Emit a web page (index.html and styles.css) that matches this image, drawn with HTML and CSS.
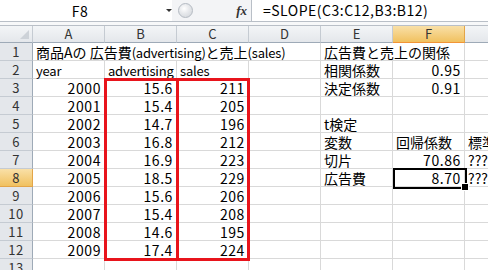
FILE: index.html
```html
<!DOCTYPE html>
<html lang="ja">
<head>
  <meta charset="UTF-8">
  <meta name="viewport" content="width=device-width, initial-scale=1.0">
  <title>広告費と売上</title>
  <link rel="stylesheet" href="styles.css">
</head>
<body>
  <div class="formula-bar">
    <div class="name-box">
      <span class="name">F8</span>
      <span class="drop"></span>
    </div>
    <div class="bar-tools">
      <span class="grip"></span>
      <span class="fx">fx</span>
    </div>
    <div class="formula">=SLOPE(C3:C12,B3:B12)</div>
  </div>
  <div class="bar-gap"></div>

  <div class="sheet">
    <div class="h corner"></div><div class="h">A</div><div class="h">B</div><div class="h">C</div><div class="h">D</div><div class="h">E</div><div class="h on">F</div><div class="h"></div>

    <div class="r">1</div><div class="c span4">商品Aの 広告費<span class="lat">(advertising)</span>と売上<span class="lat">(sales)</span></div><div class="c span2">広告費と売上の関係</div><div class="c"></div>
    <div class="r">2</div><div class="c lat">year</div><div class="c lat">advertising</div><div class="c lat">sales</div><div class="c"></div><div class="c">相関係数</div><div class="c n">0.95</div><div class="c"></div>
    <div class="r">3</div><div class="c n">2000</div><div class="c n">15.6</div><div class="c n">211</div><div class="c"></div><div class="c">決定係数</div><div class="c n">0.91</div><div class="c"></div>
    <div class="r">4</div><div class="c n">2001</div><div class="c n">15.4</div><div class="c n">205</div><div class="c"></div><div class="c"></div><div class="c"></div><div class="c"></div>
    <div class="r">5</div><div class="c n">2002</div><div class="c n">14.7</div><div class="c n">196</div><div class="c"></div><div class="c">t検定</div><div class="c"></div><div class="c"></div>
    <div class="r">6</div><div class="c n">2003</div><div class="c n">16.8</div><div class="c n">212</div><div class="c"></div><div class="c">変数</div><div class="c">回帰係数</div><div class="c">標準誤差</div>
    <div class="r">7</div><div class="c n">2004</div><div class="c n">16.9</div><div class="c n">223</div><div class="c"></div><div class="c">切片</div><div class="c n">70.86</div><div class="c">???</div>
    <div class="r on">8</div><div class="c n">2005</div><div class="c n">18.5</div><div class="c n">229</div><div class="c"></div><div class="c">広告費</div><div class="c n">8.70</div><div class="c">???</div>
    <div class="r">9</div><div class="c n">2006</div><div class="c n">15.6</div><div class="c n">206</div><div class="c"></div><div class="c"></div><div class="c"></div><div class="c"></div>
    <div class="r">10</div><div class="c n">2007</div><div class="c n">15.4</div><div class="c n">208</div><div class="c"></div><div class="c"></div><div class="c"></div><div class="c"></div>
    <div class="r">11</div><div class="c n">2008</div><div class="c n">14.6</div><div class="c n">195</div><div class="c"></div><div class="c"></div><div class="c"></div><div class="c"></div>
    <div class="r">12</div><div class="c n">2009</div><div class="c n">17.4</div><div class="c n">224</div><div class="c"></div><div class="c"></div><div class="c"></div><div class="c"></div>
    <div class="r">13</div><div class="c"></div><div class="c"></div><div class="c"></div><div class="c"></div><div class="c"></div><div class="c"></div><div class="c"></div>

    <div class="mark mark-b"></div>
    <div class="mark mark-c"></div>
    <div class="pick"></div>
  </div>
</body>
</html>
```

FILE: styles.css
```css
* {
  margin: 0;
  padding: 0;
  box-sizing: border-box;
}

body {
  width: 488px;
  height: 270px;
  overflow: hidden;
  background: #fff;
  color: #000;
  font-family: "Noto Sans CJK JP", sans-serif;
  font-size: 14px;
}

/* formula bar */
.formula-bar {
  display: flex;
  height: 22px;
  border-bottom: 1px solid #b9bfc7;
}

.name-box {
  width: 172px;
  display: flex;
  align-items: center;
  background: #fff;
}

.name-box .name {
  width: 160px;
  text-align: center;
  letter-spacing: 0.5px;
}

.name-box .drop {
  width: 0;
  height: 0;
  margin-left: 6px;
  border-left: 3px solid transparent;
  border-right: 3px solid transparent;
  border-top: 3px solid #333;
}

.bar-tools {
  width: 79px;
  display: flex;
  align-items: center;
  background: #f3f4f6;
}

.grip {
  width: 15px;
  height: 15px;
  margin-left: 6px;
  border-radius: 50%;
  border: 1px solid #b4bac2;
  background: radial-gradient(circle at 40% 35%, #ffffff 0, #e6e8eb 45%, #cfd3d8 100%);
}

.fx {
  margin-left: auto;
  padding-right: 4px;
  font-family: "Liberation Serif", serif;
  font-style: italic;
  font-weight: bold;
  font-size: 13px;
  color: #333;
}

.formula {
  flex: 1;
  padding-left: 11px;
  line-height: 21px;
  letter-spacing: 0.5px;
  background: #fff;
  border-left: 1px solid #b9bfc7;
  white-space: nowrap;
}

.bar-gap {
  height: 4px;
  background: #f7f8f9;
  border-bottom: 1px solid #b9bfc7;
}

/* sheet grid */
.sheet {
  position: relative;
  display: grid;
  grid-template-columns: 33px repeat(7, 72px);
  grid-template-rows: 17px repeat(13, 18px);
}

.c {
  padding: 2px 3px 0;
  line-height: 15px;
  white-space: nowrap;
  border-right: 1px solid #d9d9d9;
  border-bottom: 1px solid #d9d9d9;
}

.c.n {
  text-align: right;
  letter-spacing: 0.6px;
}

.lat {
  font-size: 13px;
  letter-spacing: -0.2px;
}

.span4 {
  grid-column: span 4;
}

.span2 {
  grid-column: span 2;
}

.h,
.r {
  text-align: center;
  color: #333;
  font-size: 13px;
  line-height: 16px;
  background: linear-gradient(#f3f5f7, #e4e7eb);
}

.h {
  border-right: 1px solid #c5cbd2;
  border-bottom: 1px solid #9eaab7;
}

.r {
  line-height: 17px;
  letter-spacing: 0.5px;
  background: #e4e7eb;
  border-right: 1px solid #9eaab7;
  border-bottom: 1px solid #c5cbd2;
}

.h.on,
.r.on {
  background: linear-gradient(#f9e0a8, #f1c15f);
  border-color: #e3a548;
}

.h.on {
  border-bottom-color: #f29436;
}

.corner {
  position: relative;
}

.corner::after {
  content: "";
  position: absolute;
  right: 3px;
  bottom: 3px;
  border-left: 9px solid transparent;
  border-bottom: 9px solid #cdd2d8;
}

/* overlays */
.mark {
  position: absolute;
  grid-row: 4 / 14;
  top: -1px;
  bottom: -2px;
  border: 3px solid #e8141c;
}

.mark-b {
  grid-column: 3 / 4;
  left: -1px;
  right: -2px;
}

.mark-c {
  grid-column: 4 / 5;
  left: -1px;
  right: -1px;
}

.pick {
  position: absolute;
  grid-column: 7 / 8;
  grid-row: 9 / 10;
  top: -1px;
  left: 0;
  right: -2px;
  bottom: -2px;
  border: 2px solid #000;
}

.pick::after {
  content: "";
  position: absolute;
  right: -4px;
  bottom: -4px;
  width: 6px;
  height: 6px;
  background: #000;
  border: 1px solid #fff;
}
```
